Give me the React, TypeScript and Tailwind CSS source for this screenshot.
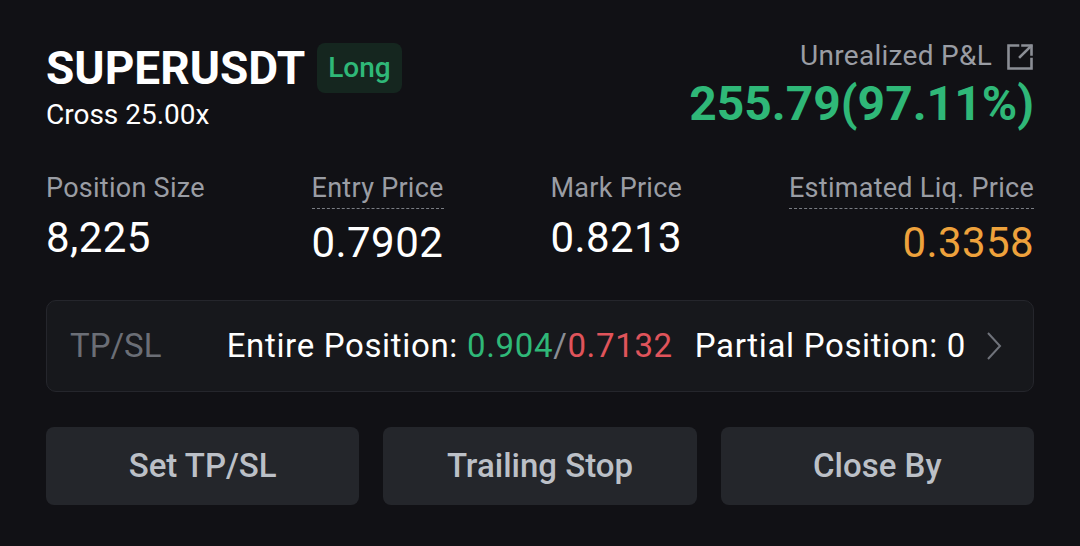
import React from "react";

const font = { fontFamily: "Roboto, 'Noto Sans', sans-serif" };

function ExternalIcon() {
  return (
    <svg width="28" height="29" viewBox="0 0 28 29" fill="none" stroke="#8b8e95" strokeWidth="2.6" strokeLinecap="square">
      <path d="M12 3.5H2.5V26.5H25.5V17" />
      <path d="M14 15L25 4" />
      <path d="M16.5 3.5H25.5V12.5" />
    </svg>
  );
}

function Chevron() {
  return (
    <svg width="16" height="28" viewBox="0 0 16 28" fill="none" stroke="#6f727a" strokeWidth="2">
      <path d="M2 1L14 14L2 27" />
    </svg>
  );
}

function Stat({ label, value, dotted, right, valueClass }: { label: string; value: string; dotted?: boolean; right?: boolean; valueClass?: string }) {
  return (
    <div className={right ? "flex flex-col items-end" : "flex flex-col items-start"}>
      <div className={"text-[27px] leading-[32px] tracking-[0.01em] text-[#9a9da4] " + (dotted ? "pb-[4px] border-b border-dashed border-[#7a7d84]" : "")}>
        {label}
      </div>
      <div className={"mt-[10px] text-[42px] leading-[48px] tracking-[0.01em] " + (valueClass ?? "text-white")}>{value}</div>
    </div>
  );
}

export default function App() {
  return (
    <div className="w-[1080px] h-[546px] bg-[#111115] px-[46px] pt-[40px]" style={font}>
      <div className="flex justify-between items-start">
        <div className="mt-[3px]">
          <div className="flex items-center gap-[12px]">
            <span className="text-[46px] leading-[50px] font-bold text-white">SUPERUSDT</span>
            <span className="h-[50px] px-[11px] rounded-[8px] bg-[#15261f] text-[#2fb878] text-[28px] font-medium flex items-center">
              Long
            </span>
          </div>
          <div className="mt-[6px] text-[28px] leading-[32px] text-white">Cross 25.00x</div>
        </div>
        <div className="flex flex-col items-end">
          <div className="flex items-center gap-[14px] text-[28px] leading-[32px] tracking-[0.01em] text-[#9a9da4]">
            <span>Unrealized P&amp;L</span>
            <ExternalIcon />
          </div>
          <div className="mt-[4px] text-[48px] leading-[56px] font-bold text-[#2fb878]">255.79(97.11%)</div>
        </div>
      </div>

      <div className="mt-[40px] flex justify-between items-start">
        <Stat label="Position Size" value="8,225" />
        <Stat label="Entry Price" value="0.7902" dotted />
        <Stat label="Mark Price" value="0.8213" />
        <Stat label="Estimated Liq. Price" value="0.3358" dotted right valueClass="text-[#eea23c]" />
      </div>

      <div className="mt-[33px] h-[92px] rounded-[10px] border border-[#25262c] bg-[#17181c] pl-[23px] pr-[31px] flex items-center text-[33px] leading-[36px]">
        <span className="text-[#6b6e76]">TP/SL</span>
        <div className="ml-auto flex items-center tracking-[0.02em]">
          <span className="text-white">Entire Position:</span>
          <span className="ml-[9px] text-[#2fb878]">0.904</span>
          <span className="text-[#8b8e95]">/</span>
          <span className="text-[#e0545b]">0.7132</span>
          <span className="ml-[22px] text-white">Partial Position: 0</span>
          <span className="ml-[20px] flex items-center">
            <Chevron />
          </span>
        </div>
      </div>

      <div className="mt-[35px] grid grid-cols-3 gap-[24px]">
        {["Set TP/SL", "Trailing Stop", "Close By"].map((t) => (
          <button key={t} className="h-[78px] rounded-[8px] bg-[#24262b] text-[33px] font-medium text-[#bcc0c7]">
            {t}
          </button>
        ))}
      </div>
    </div>
  );
}
